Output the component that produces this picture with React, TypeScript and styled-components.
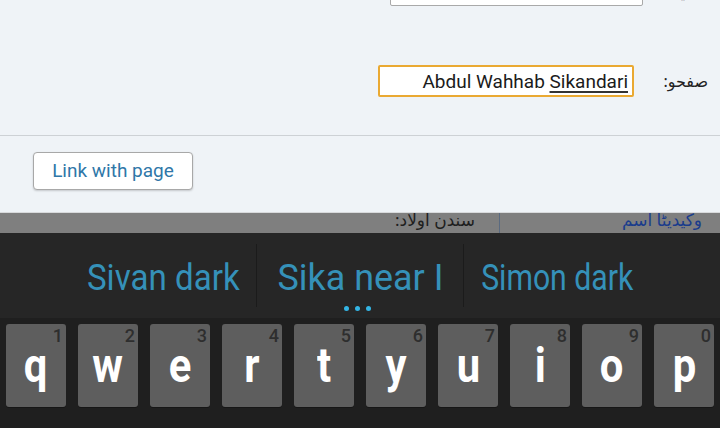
import React from "react";
import styled, { createGlobalStyle } from "styled-components";

const Global = createGlobalStyle`
  html, body { margin: 0; padding: 0; background: #1f1f1f; }
  body { width: 720px; height: 428px; overflow: hidden; font-family: Roboto, "Noto Sans", sans-serif; }
  * { box-sizing: border-box; }
`;

const Page = styled.div`
  width: 720px;
  height: 428px;
  display: flex;
  flex-direction: column;
  overflow: hidden;
`;

const Form = styled.div`
  background: #eff3f7;
  height: 136px;
  border-bottom: 1px solid #cdd1d5;
  display: flex;
  flex-direction: column;
  overflow: hidden;
`;

const FieldRow = styled.div<{ $top: number; $inputLeft: number }>`
  display: flex;
  align-items: center;
  margin-top: ${(p) => p.$top}px;
  padding-left: ${(p) => p.$inputLeft}px;
`;

const TextInput = styled.div<{ $focused?: boolean; $w: number }>`
  width: ${(p) => p.$w}px;
  height: 32px;
  background: #fff;
  border: ${(p) => (p.$focused ? "2px solid #eaa932" : "1px solid #a9a9a9")};
  border-radius: 2px;
  display: flex;
  align-items: center;
  justify-content: flex-end;
  padding-right: 4px;
  font-size: 19px;
  color: #1b1b1b;
  white-space: nowrap;
`;

const Composing = styled.span`
  text-decoration: underline;
  text-decoration-thickness: 2px;
  text-underline-offset: 3px;
  text-decoration-color: #333;
`;

const Label = styled.div<{ $w: number; $pad: number }>`
  width: ${(p) => p.$w}px;
  text-align: right;
  padding-right: ${(p) => p.$pad}px;
  direction: rtl;
  font-family: "Noto Sans", "DejaVu Sans", sans-serif;
  font-size: 16px;
  color: #222;
`;

const Actions = styled.div`
  background: #eff3f7;
  height: 77px;
  border-bottom: 1px solid #d8dadc;
  padding: 16px 0 0 33px;
`;

const Button = styled.button`
  width: 160px;
  height: 38px;
  background: #fff;
  border: 1px solid #a8a8a8;
  border-radius: 4px;
  box-shadow: 0 1px 2px rgba(0, 0, 0, 0.18);
  color: #2f77a8;
  font-family: Roboto, sans-serif;
  font-size: 19px;
  padding: 0 0 2px;
`;

const InfoBar = styled.div`
  height: 20px;
  background: #7f7f7f;
  display: flex;
  direction: rtl;
  overflow: hidden;
  font-family: "Noto Sans", "DejaVu Sans", sans-serif;
  font-size: 17px;
  line-height: 20px;
`;

const InfoCell = styled.div<{ $w: number; $color: string; $pad: number }>`
  width: ${(p) => p.$w}px;
  color: ${(p) => p.$color};
  padding-right: ${(p) => p.$pad}px;
  margin-top: -3px;
  white-space: nowrap;
`;

const InfoSep = styled.div`
  width: 1px;
  background: #5a6a80;
`;

const Keyboard = styled.div`
  flex: 1;
  background: #1f1f1f;
  display: flex;
  flex-direction: column;
`;

const Strip = styled.div`
  height: 85px;
  background: #262626;
  display: grid;
  grid-template-columns: 256px 1px 206px 1px 256px;
  position: relative;
`;

const Suggestion = styled.div<{ $shift: number }>`
  display: flex;
  align-items: center;
  justify-content: center;
  padding-left: ${(p) => Math.max(p.$shift, 0)}px;
  padding-right: ${(p) => Math.max(-p.$shift, 0)}px;
  padding-top: 4px;
  color: #3591b9;
  font-size: 37px;
  white-space: nowrap;
`;

const SuggestionText = styled.span<{ $sx: number }>`
  display: inline-block;
  transform: scaleX(${(p) => p.$sx});
`;

const StripSep = styled.div`
  background: #1b1b1b;
  margin: 11px 0 11px;
`;

const Dots = styled.div`
  position: absolute;
  left: 344px;
  top: 73px;
  display: flex;
  gap: 6px;
`;

const Dot = styled.span`
  width: 5px;
  height: 5px;
  border-radius: 50%;
  background: #33b5e5;
`;

const KeyRow = styled.div`
  display: flex;
  gap: 12px;
  padding: 6px 0 0 6px;
`;

const Key = styled.div`
  width: 60px;
  height: 83px;
  background: #5e5e5e;
  border-radius: 3px;
  box-shadow: 0 1px 0 #161616;
  position: relative;
  display: flex;
  align-items: flex-start;
  justify-content: center;
  padding-top: 18px;
  color: #fff;
  font-family: Roboto, sans-serif;
  font-weight: 700;
  font-size: 48px;
  line-height: 48px;
`;

const KeyLetter = styled.span`
  display: inline-block;
  transform: scaleX(0.87);
`;

const Hint = styled.span`
  position: absolute;
  right: 3px;
  top: 3px;
  font-size: 18px;
  line-height: 18px;
  font-weight: 500;
  color: #2e2e2e;
`;

const keys = [
  ["q", "1"], ["w", "2"], ["e", "3"], ["r", "4"], ["t", "5"],
  ["y", "6"], ["u", "7"], ["i", "8"], ["o", "9"], ["p", "0"],
];

export default function App() {
  return (
    <Page>
      <Global />
      <Form>
        <FieldRow $top={-26} $inputLeft={390}>
          <TextInput $w={253} />
          <Label $w={77} $pad={30}>ي</Label>
        </FieldRow>
        <FieldRow $top={59} $inputLeft={378}>
          <TextInput $w={256} $focused>
            Abdul Wahhab&nbsp;<Composing>Sikandari</Composing>
          </TextInput>
          <Label $w={86} $pad={12}>صفحو:</Label>
        </FieldRow>
      </Form>
      <Actions>
        <Button>Link with page</Button>
      </Actions>
      <InfoBar>
        <InfoCell $w={220} $color="#1a3c8c" $pad={18}>وکیدیٹا اسم</InfoCell>
        <InfoSep />
        <InfoCell $w={499} $color="#1e1e1e" $pad={24}>سندن اولاد:</InfoCell>
      </InfoBar>
      <Keyboard>
        <Strip>
          <Suggestion $shift={70}>
            <SuggestionText $sx={0.895}>Sivan dark</SuggestionText>
          </Suggestion>
          <StripSep />
          <Suggestion $shift={0}>
            <SuggestionText $sx={0.97}>Sika near I</SuggestionText>
          </Suggestion>
          <StripSep />
          <Suggestion $shift={-70}>
            <SuggestionText $sx={0.816}>Simon dark</SuggestionText>
          </Suggestion>
          <Dots>
            <Dot />
            <Dot />
            <Dot />
          </Dots>
        </Strip>
        <KeyRow>
          {keys.map(([k, n]) => (
            <Key key={k}>
              <KeyLetter>{k}</KeyLetter>
              <Hint>{n}</Hint>
            </Key>
          ))}
        </KeyRow>
      </Keyboard>
    </Page>
  );
}
